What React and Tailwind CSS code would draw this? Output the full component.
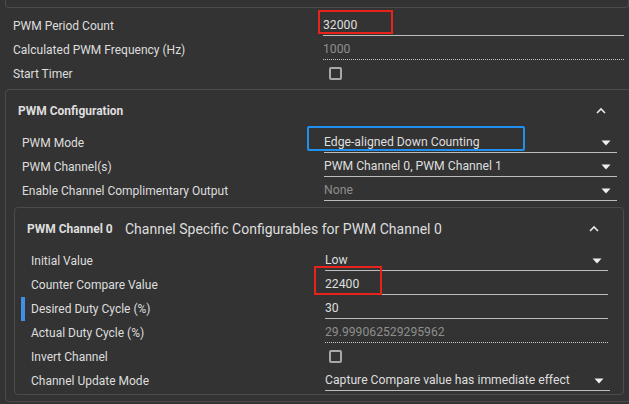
import React from 'react';

const Caret = () => (
  <svg width="10" height="6" viewBox="0 0 10 6" className="shrink-0">
    <path d="M0.5 0.5 L9.5 0.5 L5 5.5 Z" fill="#f0f0f0" />
  </svg>
);

const ChevronUp = () => (
  <svg width="10" height="7" viewBox="0 0 10 7">
    <path d="M1 6 L5 2 L9 6" fill="none" stroke="#e8e8e8" strokeWidth="1.6" />
  </svg>
);

const TextValue = ({ value, disabled }) => (
  <div
    className={`h-[21px] flex items-end pb-[3px] text-[12.2px] ${
      disabled
        ? 'text-[#8e8e8e] border-b border-dotted border-[#c8c8c8]'
        : 'text-[#dedede] border-b border-[#bdbdbd]'
    }`}
  >
    {value}
  </div>
);

const SelectValue = ({ value, disabled }) => (
  <div className="h-[21px] flex items-end justify-between pb-[3px] border-b border-[#bdbdbd] text-[12.2px]">
    <span className={disabled ? 'text-[#8e8e8e]' : 'text-[#dedede]'}>{value}</span>
    <span className="pr-[6px] pb-[3px]">
      <Caret />
    </span>
  </div>
);

const CheckValue = ({ offset }) => (
  <div className={`h-[21px] flex items-center ${offset}`}>
    <div className="w-[13px] h-[13px] border-2 border-[#a8a8a8] rounded-[2px]" />
  </div>
);

const Row = ({ label, labelW, children, marker }) => (
  <div className="relative h-[24px] flex items-center">
    {marker && <div className="absolute left-[-10px] top-[2px] w-[4px] h-[24px] bg-[#3d8fe8]" />}
    <div className="shrink-0 text-[#dedede] pt-[3px]" style={{ width: labelW }}>
      {label}
    </div>
    <div className="relative flex-1 pt-[2px]">{children}</div>
  </div>
);

export default function App() {
  return (
    <div
      className="w-[629px] h-[404px] overflow-hidden bg-[#333333] text-[12px] leading-none"
      style={{ fontFamily: 'Roboto, "Liberation Sans", sans-serif' }}
    >
      {/* end of the panel above */}
      <div className="ml-[5px] h-[8px] border border-t-0 border-[#4b4b4b] rounded-b-[4px]" />

      <div className="pl-[13px] pr-[5px] mt-[4px]">
        <Row label="PWM Period Count" labelW={310}>
          <TextValue value="32000" />
          <div className="absolute left-[-5px] top-[-3px] w-[75px] h-[24px] border-2 border-[#e8231c]" />
        </Row>
        <Row label="Calculated PWM Frequency (Hz)" labelW={310}>
          <TextValue value="1000" disabled />
        </Row>
        <Row label="Start Timer" labelW={310}>
          <CheckValue offset="pl-[6px]" />
        </Row>
      </div>

      {/* PWM Configuration */}
      <div className="ml-[5px] mr-[-2px] mt-[5px] border border-[#4b4b4b] rounded-[4px] pb-[6px]">
        <div className="h-[39px] flex items-center justify-between pl-[12px] pr-[24px] pt-[2px]">
          <span className="font-bold text-[#dedede]">PWM Configuration</span>
          <ChevronUp />
        </div>
        <div className="pl-[16px] pr-[13px]">
          <Row label="PWM Mode" labelW={302}>
            <SelectValue value="Edge-aligned Down Counting" />
            <div className="absolute left-[-17px] top-[-4px] w-[218px] h-[25px] border-2 border-[#1f8ff0] rounded-[2px]" />
          </Row>
          <Row label="PWM Channel(s)" labelW={302}>
            <SelectValue value="PWM Channel 0, PWM Channel 1" />
          </Row>
          <Row label="Enable Channel Complimentary Output" labelW={302}>
            <SelectValue value="None" disabled />
          </Row>
        </div>

        {/* PWM Channel 0 */}
        <div className="ml-[8px] mr-[6px] mt-[6px] border border-[#4b4b4b] rounded-[4px] pb-[3px]">
          <div className="h-[39px] flex items-center justify-between pl-[12px] pr-[24px] pt-[2px]">
            <div className="flex items-center">
              <span className="font-bold text-[#dedede] w-[98px]">PWM Channel 0</span>
              <span className="text-[14px] text-[#dedede]">Channel Specific Configurables for PWM Channel 0</span>
            </div>
            <ChevronUp />
          </div>
          <div className="pl-[16px] pr-[15px]">
            <Row label="Initial Value" labelW={294}>
              <SelectValue value="Low" />
            </Row>
            <Row label="Counter Compare Value" labelW={294}>
              <TextValue value="22400" />
              <div className="absolute left-[-11px] top-[-6px] w-[68px] h-[29px] border-2 border-[#e8231c]" />
            </Row>
            <Row label="Desired Duty Cycle (%)" labelW={294} marker>
              <TextValue value="30" />
            </Row>
            <Row label="Actual Duty Cycle (%)" labelW={294}>
              <TextValue value="29.999062529295962" disabled />
            </Row>
            <Row label="Invert Channel" labelW={294}>
              <CheckValue offset="pl-[4px]" />
            </Row>
            <Row label="Channel Update Mode" labelW={294}>
              <div className="mr-[-2px]">
                <SelectValue value="Capture Compare value has immediate effect" />
              </div>
            </Row>
          </div>
        </div>
      </div>
    </div>
  );
}
